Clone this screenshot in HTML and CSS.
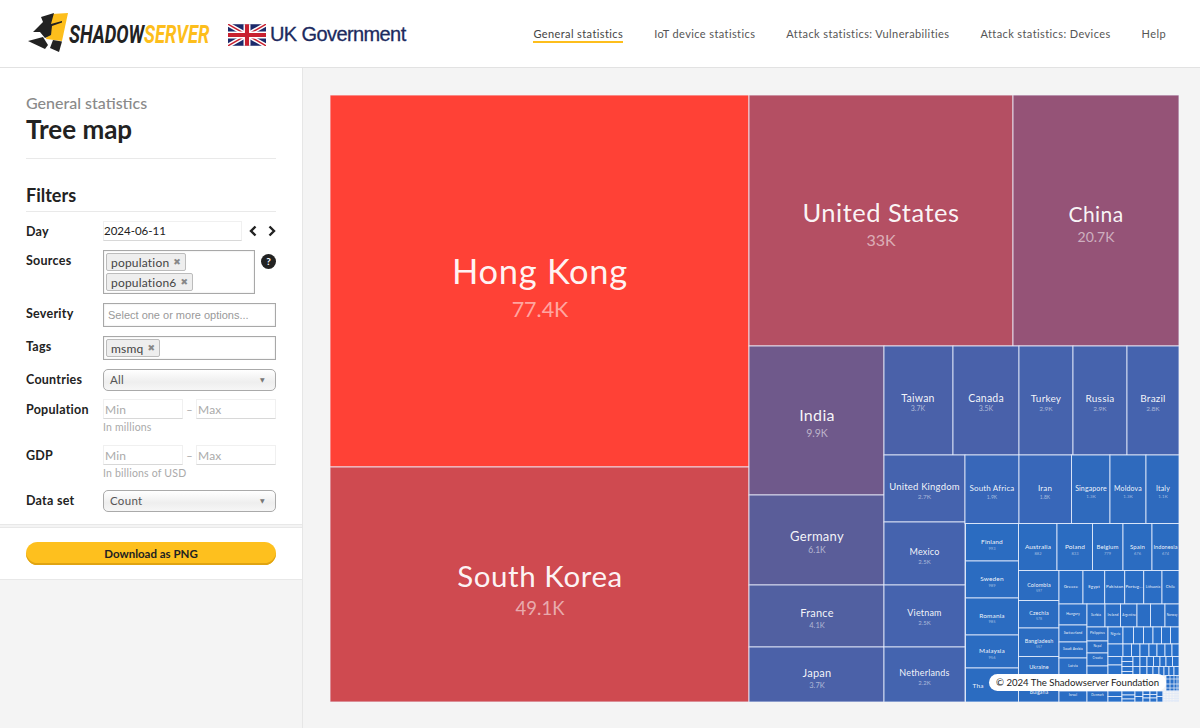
FILE: index.html
```html
<!DOCTYPE html>
<html lang="en">
<head>
<meta charset="utf-8">
<title>Tree map - Shadowserver</title>
<link rel="stylesheet" href="styles.css">
</head>
<body>
<header class="topbar">
  <div class="brand">
    <svg class="logo" viewBox="0 0 186 44" width="186" height="44" aria-label="Shadowserver">
      <polygon fill="#fdbe1c" points="28,2 44,1 38,29 22,27"/>
      <polygon fill="#222" points="17,5 30,1 27,12 38,9 38,10.500 28,14 27,23 21,26 16,20 9,20 16,13 19,10"/>
      <polygon fill="#222" points="4,29 19,25 24,33 21,37"/>
      <polygon fill="#222" points="29,28 38,29.500 35,40 26,36"/>
      <text class="logo-word" transform="translate(45 31) scale(.735 1)"><tspan fill="#222">SHADOW</tspan><tspan fill="#fdbe1c">SERVER</tspan></text>
    </svg>
    <div class="gov">
      <svg class="flag" viewBox="0 0 60 34" width="38" height="22">
        <rect width="60" height="34" fill="#1d2a6b"/>
        <path d="M0 0L60 34M60 0L0 34" stroke="#fff" stroke-width="7"/>
        <path d="M0 0L60 34M60 0L0 34" stroke="#c8202f" stroke-width="2.4"/>
        <path d="M30 0V34M0 17H60" stroke="#fff" stroke-width="11"/>
        <path d="M30 0V34M0 17H60" stroke="#c8202f" stroke-width="6.5"/>
      </svg>
      <span class="gov-name">UK Government</span>
    </div>
  </div>
  <nav class="nav">
    <a class="nav-item active">General statistics</a>
    <a class="nav-item">IoT device statistics</a>
    <a class="nav-item">Attack statistics: Vulnerabilities</a>
    <a class="nav-item">Attack statistics: Devices</a>
    <a class="nav-item">Help</a>
  </nav>
</header>
<div class="page">
  <aside class="sidebar">
    <div class="panel">
      <div class="crumb">General statistics</div>
      <h1 class="title">Tree map</h1>
      <hr class="rule">
      <h2 class="filters">Filters</h2>
      <hr class="rule rule-tight">
      <div class="row row-day">
        <label class="lbl">Day</label>
        <div class="ctl day-ctl">
          <input class="field date" value="2024-06-11">
          <svg class="chev" viewBox="0 0 10 12" width="10" height="12"><path d="M7.5 1.5L3 6l4.5 4.5" fill="none" stroke="#222" stroke-width="2.4"/></svg>
          <svg class="chev" viewBox="0 0 10 12" width="10" height="12"><path d="M2.5 1.5L7 6l-4.5 4.5" fill="none" stroke="#222" stroke-width="2.4"/></svg>
        </div>
      </div>
      <div class="row row-src">
        <label class="lbl">Sources</label>
        <div class="ctl src-ctl">
          <div class="multi multi-src">
            <span class="tag">population <b class="x">✖</b></span>
            <span class="tag">population6 <b class="x">✖</b></span>
          </div>
          <span class="help">?</span>
        </div>
      </div>
      <div class="row row-sev">
        <label class="lbl">Severity</label>
        <div class="ctl"><div class="multi placeholder">Select one or more options...</div></div>
      </div>
      <div class="row row-tags">
        <label class="lbl">Tags</label>
        <div class="ctl"><div class="multi"><span class="tag">msmq <b class="x">✖</b></span></div></div>
      </div>
      <div class="row row-cty">
        <label class="lbl">Countries</label>
        <div class="ctl"><div class="select"><span>All</span><i class="arrow">▼</i></div></div>
      </div>
      <div class="row row-pop">
        <label class="lbl">Population</label>
        <div class="ctl">
          <div class="range"><input class="field" placeholder="Min"><span class="dash">–</span><input class="field" placeholder="Max"></div>
          <div class="hint">In millions</div>
        </div>
      </div>
      <div class="row row-gdp">
        <label class="lbl">GDP</label>
        <div class="ctl">
          <div class="range"><input class="field" placeholder="Min"><span class="dash">–</span><input class="field" placeholder="Max"></div>
          <div class="hint">In billions of USD</div>
        </div>
      </div>
      <div class="row row-set">
        <label class="lbl">Data set</label>
        <div class="ctl"><div class="select"><span>Count</span><i class="arrow">▼</i></div></div>
      </div>
    </div>
    <div class="actions">
      <button class="download">Download as PNG</button>
    </div>
  </aside>
  <main class="main">
    <div class="map">
      <svg class="tree" viewBox="330 95 849 607" width="849" height="607">
        <g class="cells">
          <rect x="330" y="95" width="419" height="372" fill="#ff4136"/>
          <rect x="330" y="467" width="419" height="235" fill="#cf4a50"/>
          <rect x="749" y="95" width="264" height="251" fill="#b44f63"/>
          <rect x="1013" y="95" width="166" height="251" fill="#955377"/>
          <rect x="749" y="346" width="135" height="149" fill="#6f598b"/>
          <rect x="749" y="495" width="135" height="90" fill="#5a5d99"/>
          <rect x="749" y="585" width="135" height="62" fill="#5160a1"/>
          <rect x="749" y="647" width="135" height="55" fill="#4b61a8"/>
          <rect x="884" y="346" width="69" height="109" fill="#4a61a9"/>
          <rect x="953" y="346" width="66" height="109" fill="#4961aa"/>
          <rect x="1019" y="346" width="54" height="109" fill="#4663ad"/>
          <rect x="1073" y="346" width="54" height="109" fill="#4663ad"/>
          <rect x="1127" y="346" width="52" height="109" fill="#4563ae"/>
          <rect x="884" y="455" width="81" height="67" fill="#4563ae"/>
          <rect x="884" y="522" width="81" height="63" fill="#4563ae"/>
          <rect x="884" y="585" width="81" height="62" fill="#4563ae"/>
          <rect x="884" y="647" width="81" height="55" fill="#4464af"/>
          <rect x="965" y="455" width="54" height="68.500" fill="#3867b9"/>
          <rect x="1019" y="455" width="52.500" height="68.500" fill="#3867b9"/>
          <rect x="1071.500" y="455" width="38.500" height="68.500" fill="#2f6abd"/>
          <rect x="1110" y="455" width="36" height="68.500" fill="#2f6abd"/>
          <rect x="1146" y="455" width="33" height="68.500" fill="#2e6abe"/>
          <g fill="#2b6cc1">
            <rect x="965.500" y="523.500" width="53" height="37.500"/>
            <rect x="965.500" y="561" width="53" height="37"/>
            <rect x="965.500" y="598" width="53" height="37"/>
            <rect x="965.500" y="635" width="53" height="33"/>
            <rect x="965.500" y="668" width="53" height="34"/>
            <rect x="1018.500" y="523.500" width="38.500" height="47"/>
            <rect x="1057" y="523.500" width="35.500" height="47"/>
            <rect x="1092.500" y="523.500" width="30.500" height="47"/>
            <rect x="1123" y="523.500" width="29" height="47"/>
            <rect x="1152" y="523.500" width="27" height="47"/>
            <rect x="1018.500" y="570.500" width="40.500" height="30"/>
            <rect x="1018.500" y="600.500" width="40.500" height="27.500"/>
            <rect x="1018.500" y="628" width="40.500" height="28.500"/>
            <rect x="1018.500" y="656.500" width="40.500" height="26.500"/>
            <rect x="1018.500" y="683" width="40.500" height="19"/>
          </g>
          <g fill="#2a6dc4">
            <rect x="1059" y="570.500" width="24" height="33.500"/>
            <rect x="1083" y="570.500" width="21.700" height="33.500"/>
            <rect x="1104.700" y="570.500" width="20" height="33.500"/>
            <rect x="1124.700" y="570.500" width="19" height="33.500"/>
            <rect x="1143.700" y="570.500" width="18.300" height="33.500"/>
            <rect x="1162" y="570.500" width="17" height="33.500"/>
            <rect x="1059" y="604" width="28" height="21"/>
            <rect x="1059" y="625" width="28" height="17"/>
            <rect x="1059" y="642" width="28" height="16"/>
            <rect x="1059" y="658" width="28" height="17"/>
            <rect x="1059" y="675" width="28" height="16"/>
            <rect x="1059" y="691" width="28" height="11"/>
            <rect x="1087" y="604" width="18" height="23"/>
            <rect x="1105" y="604" width="15.500" height="23"/>
            <rect x="1120.500" y="604" width="16.500" height="23"/>
            <rect x="1137" y="604" width="13.500" height="23"/>
            <rect x="1150.500" y="604" width="14.500" height="23"/>
            <rect x="1165" y="604" width="14" height="23"/>
            <rect x="1087" y="627" width="21" height="14"/>
            <rect x="1087" y="641" width="21" height="12"/>
            <rect x="1087" y="653" width="21" height="13"/>
            <rect x="1087" y="666" width="21" height="13"/>
            <rect x="1087" y="679" width="21" height="12"/>
            <rect x="1087" y="691" width="21" height="11"/>
          </g>
          <g fill="#2970c9">
            <rect x="1108" y="627" width="15" height="17"/>
            <rect x="1123" y="627" width="10.500" height="17"/>
            <rect x="1133.500" y="627" width="10" height="17"/>
            <rect x="1143.500" y="627" width="9.500" height="17"/>
            <rect x="1153" y="627" width="8.500" height="17"/>
            <rect x="1161.500" y="627" width="9" height="17"/>
            <rect x="1170.500" y="627" width="8.500" height="17"/>
            <rect x="1108" y="644" width="15" height="12.500"/>
            <rect x="1123" y="644" width="8.500" height="12.500"/>
            <rect x="1131.500" y="644" width="8.500" height="12.500"/>
            <rect x="1140" y="644" width="9" height="12.500"/>
            <rect x="1149" y="644" width="8" height="12.500"/>
            <rect x="1157" y="644" width="8" height="12.500"/>
            <rect x="1165" y="644" width="7" height="12.500"/>
            <rect x="1172" y="644" width="7" height="12.500"/>
            <rect x="1108" y="656.500" width="14" height="8.500"/>
            <rect x="1108" y="665" width="14" height="10"/>
            <rect x="1108" y="675" width="14" height="16"/>
            <rect x="1108" y="691" width="14" height="5.500"/>
            <rect x="1108" y="696.500" width="14" height="5.500"/>
            <rect x="1122" y="656.500" width="11" height="5"/>
            <rect x="1122" y="661.500" width="11" height="5"/>
            <rect x="1122" y="666.500" width="11" height="5"/>
            <rect x="1122" y="671.500" width="11" height="4"/>
            <rect x="1133" y="656.500" width="7" height="10"/>
            <rect x="1140" y="656.500" width="7" height="10"/>
            <rect x="1147" y="656.500" width="6.500" height="10"/>
            <rect x="1153.500" y="656.500" width="6.500" height="10"/>
            <rect x="1160" y="656.500" width="6" height="10"/>
            <rect x="1166" y="656.500" width="6.500" height="10"/>
            <rect x="1172.500" y="656.500" width="6.500" height="10"/>
            <rect x="1133" y="666.500" width="7" height="9"/>
            <rect x="1140" y="666.500" width="7" height="9"/>
            <rect x="1147" y="666.500" width="6" height="9"/>
            <rect x="1153" y="666.500" width="6" height="9"/>
            <rect x="1159" y="666.500" width="5" height="9"/>
            <rect x="1164" y="666.500" width="5" height="9"/>
            <rect x="1169" y="666.500" width="5" height="9"/>
            <rect x="1174" y="666.500" width="5" height="9"/>
            <rect x="1166" y="675.500" width="13" height="15.500"/>
            <rect x="1122" y="691" width="13" height="4"/>
            <rect x="1122" y="695" width="13" height="4"/>
            <rect x="1122" y="699" width="13" height="3"/>
            <rect x="1135" y="691" width="8" height="5.500"/>
            <rect x="1135" y="696.500" width="8" height="5.500"/>
            <rect x="1143" y="691" width="7" height="3.500"/>
            <rect x="1143" y="694.500" width="7" height="3.500"/>
            <rect x="1143" y="698" width="7" height="4"/>
            <rect x="1150" y="691" width="7" height="3.500"/>
            <rect x="1150" y="694.500" width="7" height="3.500"/>
            <rect x="1150" y="698" width="7" height="4"/>
            <rect x="1157" y="691" width="6" height="5.500"/>
            <rect x="1157" y="696.500" width="6" height="5.500"/>
          </g>
          <path class="fine" d="M1163 691h16v11h-16zM1163 693.500h16M1163 696h16M1163 698.500h16M1163 700.500h16M1166 691v11M1169 691v11M1172 691v11M1175 691v11M1177 691v11M1166 679h13M1166 684h13M1166 688h13M1170 675.500v15.500M1174 675.500v15.500M1177 675.500v15.500"/>
        </g>
        <g class="names">
          <text x="540" y="284" font-size="34.500">Hong Kong</text>
          <text x="540" y="587" font-size="29.500">South Korea</text>
          <text x="881" y="222" font-size="25.500">United States</text>
          <text x="1096" y="222" font-size="21">China</text>
          <text x="817" y="421" font-size="16">India</text>
          <text x="817" y="541" font-size="13">Germany</text>
          <text x="817" y="617" font-size="11">France</text>
          <text x="817" y="677" font-size="11">Japan</text>
          <text x="918" y="402" font-size="10.500">Taiwan</text>
          <text x="986" y="402" font-size="10.500">Canada</text>
          <text x="1046" y="402" font-size="10">Turkey</text>
          <text x="1100" y="402" font-size="10">Russia</text>
          <text x="1153" y="402" font-size="10">Brazil</text>
          <text x="924.500" y="490" font-size="9.500">United Kingdom</text>
          <text x="924.500" y="555" font-size="9">Mexico</text>
          <text x="924.500" y="616" font-size="9">Vietnam</text>
          <text x="924.500" y="676" font-size="9">Netherlands</text>
          <text x="992" y="491" font-size="8">South Africa</text>
          <text x="1045" y="491" font-size="8">Iran</text>
          <text x="1091" y="491" font-size="7">Singapore</text>
          <text x="1128" y="491" font-size="7">Moldova</text>
          <text x="1163" y="491" font-size="7">Italy</text>
          <text x="992" y="544" font-size="6.500">Finland</text>
          <text x="992" y="581" font-size="6.500">Sweden</text>
          <text x="992" y="618" font-size="6.500">Romania</text>
          <text x="992" y="653" font-size="6.500">Malaysia</text>
          <text x="978" y="688" font-size="6.500">Tha</text>
          <text x="1038" y="549" font-size="6.500">Australia</text>
          <text x="1075" y="549" font-size="6.500">Poland</text>
          <text x="1107.500" y="549" font-size="6">Belgium</text>
          <text x="1137.500" y="549" font-size="6">Spain</text>
          <text x="1165.500" y="549" font-size="5.500">Indonesia</text>
          <text x="1039" y="587" font-size="5.500">Colombia</text>
          <text x="1039" y="615" font-size="5.500">Czechia</text>
          <text x="1039" y="643" font-size="5.500">Bangladesh</text>
          <text x="1039" y="669" font-size="5.500">Ukraine</text>
          <text x="1039" y="694" font-size="5">Bulgaria</text>
          <text x="1071" y="588" font-size="4.500">Greece</text>
          <text x="1094" y="588" font-size="4.500">Egypt</text>
          <text x="1114.700" y="588" font-size="4.500">Pakistan</text>
          <text x="1134" y="588" font-size="4.500">Portug...</text>
          <text x="1153" y="588" font-size="3.500">Lithuania</text>
          <text x="1170.500" y="588" font-size="4">Chile</text>
          <text x="1073" y="615" font-size="3.500">Hungary</text>
          <text x="1073" y="634" font-size="3.500">Switzerland</text>
          <text x="1073" y="650" font-size="3.500">Saudi Arabia</text>
          <text x="1073" y="667" font-size="3.500">Latvia</text>
          <text x="1073" y="696" font-size="3.500">Israel</text>
          <text x="1096" y="616" font-size="3.500">Serbia</text>
          <text x="1113" y="616" font-size="3.500">Ireland</text>
          <text x="1129" y="616" font-size="3">Argentina</text>
          <text x="1172" y="616" font-size="3">Norway</text>
          <text x="1097.500" y="634" font-size="3">Philippines</text>
          <text x="1097.500" y="647" font-size="3">Nepal</text>
          <text x="1097.500" y="659" font-size="3">Croatia</text>
          <text x="1097.500" y="696" font-size="3">Denmark</text>
          <text x="1115.500" y="635" font-size="3">Nigeria</text>
        </g>
        <g class="values">
          <text x="540" y="317" font-size="21.500">77.4K</text>
          <text x="540" y="615" font-size="18.500">49.1K</text>
          <text x="881" y="246" font-size="16">33K</text>
          <text x="1096" y="242" font-size="14">20.7K</text>
          <text x="817" y="437" font-size="10.500">9.9K</text>
          <text x="817" y="553" font-size="8.500">6.1K</text>
          <text x="817" y="628" font-size="7.500">4.1K</text>
          <text x="817" y="688" font-size="7.500">3.7K</text>
          <text x="918" y="411" font-size="7">3.7K</text>
          <text x="986" y="411" font-size="7">3.5K</text>
          <text x="1046" y="411" font-size="6.500">2.9K</text>
          <text x="1100" y="411" font-size="6.500">2.9K</text>
          <text x="1153" y="411" font-size="6.500">2.8K</text>
          <text x="924.500" y="499" font-size="6.500">2.7K</text>
          <text x="924.500" y="564" font-size="6">2.5K</text>
          <text x="924.500" y="625" font-size="6">2.5K</text>
          <text x="924.500" y="685" font-size="6">2.2K</text>
          <text x="992" y="499" font-size="5">1.9K</text>
          <text x="1045" y="499" font-size="5">1.8K</text>
          <text x="1091" y="498" font-size="4.500">1.3K</text>
          <text x="1128" y="498" font-size="4.500">1.3K</text>
          <text x="1163" y="498" font-size="4.500">1.1K</text>
          <text x="992" y="550" font-size="4">993</text>
          <text x="992" y="587" font-size="4">989</text>
          <text x="992" y="623" font-size="4">985</text>
          <text x="992" y="659" font-size="4">956</text>
          <text x="1038" y="555" font-size="4">882</text>
          <text x="1075" y="555" font-size="4">833</text>
          <text x="1107.500" y="555" font-size="4">779</text>
          <text x="1137.500" y="555" font-size="4">676</text>
          <text x="1165.500" y="555" font-size="4">674</text>
          <text x="1039" y="592" font-size="3.500">597</text>
          <text x="1039" y="620" font-size="3.500">578</text>
          <text x="1039" y="648" font-size="3.500">557</text>
        </g>
      </svg>
      <div class="credit">© 2024 The Shadowserver Foundation</div>
    </div>
  </main>
</div>
</body>
</html>
```

FILE: styles.css
```css
* { box-sizing: border-box; }
html, body { margin: 0; height: 100%; }
body {
  font-family: "Lato", "Noto Sans", sans-serif;
  color: #222;
  background: #f4f4f4;
  overflow: hidden;
}
.topbar {
  height: 68px;
  background: #fff;
  border-bottom: 1px solid #e2e2e2;
  display: flex;
  align-items: center;
  justify-content: space-between;
  padding: 0 34px 0 24px;
}
.brand { display: flex; align-items: center; gap: 18px; }
.logo { display: block; }
.logo-word { font: italic 700 25px "Roboto", sans-serif; }
.gov { display: flex; align-items: center; gap: 4px; margin-top: 2px; }
.flag { display: block; }
.gov-name {
  font: 400 20px "Liberation Sans", sans-serif;
  letter-spacing: -0.6px;
  -webkit-text-stroke: 0.3px #1c2a5e;
  color: #1c2a5e;
}
.nav { display: flex; gap: 31px; margin-top: 2px; }
.nav-item {
  font-size: 11px;
  line-height: 13px;
  letter-spacing: 0.4px;
  color: #555;
  padding-bottom: 1px;
  border-bottom: 2px solid transparent;
}
.nav-item.active { color: #444; border-bottom-color: #fdbe1c; }
.page { display: flex; height: 660px; }
.sidebar {
  width: 303px;
  flex: none;
  border-right: 1px solid #e6e6e6;
}
.panel {
  background: #fff;
  padding: 25px 26px 12px;
  border-bottom: 1px solid #e8e8e8;
}
.crumb { font-size: 16px; line-height: 20px; color: #8a8a8a; font-weight: 500; }
.title { margin: 0; font-size: 26px; line-height: 32px; font-weight: 700; color: #222; }
.rule { border: 0; border-top: 1px solid #e9e9e9; margin: 13px 0 0; }
.filters { margin: 25px 0 0; font-size: 18px; line-height: 22px; font-weight: 700; color: #222; }
.rule-tight { margin-top: 5px; }
.row {
  display: grid;
  grid-template-columns: 77px 1fr;
  align-items: start;
  margin-top: 9px;
}
.lbl { font-size: 12.500px; font-weight: 700; line-height: 19px; padding-top: 1px; color: #222; letter-spacing: 0.25px; }
.ctl { min-width: 0; }
.day-ctl { display: flex; align-items: center; gap: 6px; }
.day-ctl .date { width: 139px; margin-right: -1px; flex: none; font-size: 11.500px; letter-spacing: 0; padding: 0 0 2px; }
.chev { flex: none; margin-left: 1px; margin-right: 2px; }
.field {
  display: block;
  width: 80px;
  height: 20px;
  border: 1px solid #f0f0f0;
  border-bottom: 1px solid #d8d8d8;
  background: #fff;
  padding: 0 1px;
  font: 12px "Lato", sans-serif;
  letter-spacing: 0.2px;
  color: #222;
  outline: 0;
}
.field::placeholder { color: #aaa; }
.src-ctl { display: flex; align-items: flex-start; gap: 6px; }
.multi {
  border: 1px solid #a8a8a8;
  box-shadow: inset 0 0 2px #ddd;
  min-height: 24px;
  padding: 2px;
  display: flex;
  flex-wrap: wrap;
  gap: 2px;
  font-size: 12px;
}
.multi-src { width: 152px; height: 44px; flex: none; }
.placeholder {
  font: 11px/22px "Liberation Sans", sans-serif;
  color: #999;
  padding: 0 4px;
}
.tag {
  display: inline-flex;
  align-items: center;
  gap: 4px;
  height: 18px;
  padding: 0 4px;
  background: #eee;
  border: 1px solid #bcbcbc;
  border-radius: 2px;
  color: #444;
  letter-spacing: 0.2px;
  font-size: 12px;
}
.x { font: 9px "DejaVu Sans", sans-serif; color: #888; }
.help {
  width: 15px;
  height: 15px;
  margin-top: 4px;
  border-radius: 50%;
  background: #222;
  color: #fff;
  font-size: 10px;
  font-weight: 700;
  line-height: 15px;
  text-align: center;
  flex: none;
}
.select {
  height: 22px;
  border: 1px solid #aaa;
  border-radius: 5px;
  background: linear-gradient(#fff, #eee 60%, #f6f6f6);
  padding: 0 6px 2px;
  display: flex;
  align-items: center;
  justify-content: space-between;
  font-size: 11.500px;
  letter-spacing: 0.3px;
  color: #555;
}
.arrow { font: normal 6px "DejaVu Sans", sans-serif; color: #777; margin-right: 4px; }
.range { display: flex; align-items: center; justify-content: space-between; }
.dash { font-size: 11px; color: #aaa; }
.hint { font-size: 10.500px; line-height: 14px; margin-top: 1px; color: #aaa; letter-spacing: 0.2px; }
.row-pop { margin-top: 8px; }
.row-gdp { margin-top: 11px; }
.row-set { margin-top: 10px; }
.actions {
  background: #fff;
  margin-top: 2px;
  border-top: 1px solid #e8e8e8;
  border-bottom: 1px solid #e8e8e8;
  padding: 14px 26px 14px;
}
.download {
  display: block;
  width: 100%;
  height: 23px;
  border: 0;
  border-radius: 12px;
  background: #fec01e;
  box-shadow: inset 0 -2px 0 #e0a412;
  font: 700 11.500px "Lato", sans-serif;
  color: #222;
}
.main { flex: 1; padding: 27px 21px 26px 27px; }
.map { position: relative; width: 849px; height: 607px; }
.tree { display: block; }
.cells rect { stroke: rgba(236, 243, 255, 0.8); stroke-width: 1; }
.fine { fill: none; stroke: #dfe9f7; stroke-width: 0.8; }
.names text, .values text { text-anchor: middle; font-family: "Lato", "Noto Sans", sans-serif; }
.names text { fill: #fff; fill-opacity: 0.95; letter-spacing: 0.02em; }
.values text { fill: #fff; fill-opacity: 0.55; }
.credit {
  position: absolute;
  left: 659px;
  top: 579px;
  height: 17px;
  width: 177px;
  border-radius: 9px;
  background: #fff;
  font-size: 9.600px;
  line-height: 17px;
  color: #222;
  text-align: center;
  white-space: nowrap;
}
```
